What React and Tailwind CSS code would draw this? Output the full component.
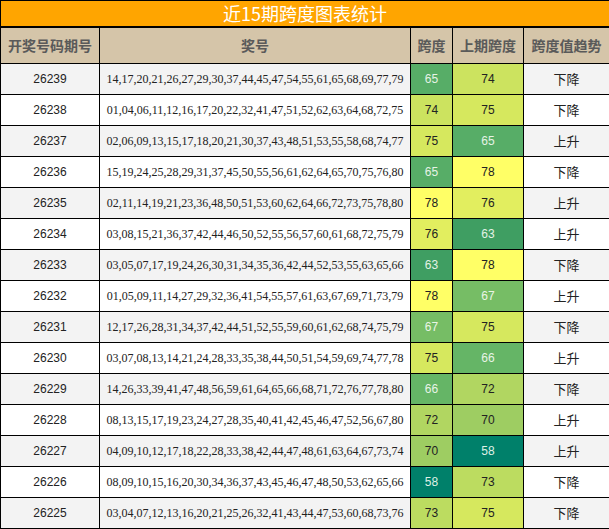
const rows = [
  ["26239", "14,17,20,21,26,27,29,30,37,44,45,47,54,55,61,65,68,69,77,79", 65, 74, "下降"],
  ["26238", "01,04,06,11,12,16,17,20,22,32,41,47,51,52,62,63,64,68,72,75", 74, 75, "下降"],
  ["26237", "02,06,09,13,15,17,18,20,21,30,37,43,48,51,53,55,58,68,74,77", 75, 65, "上升"],
  ["26236", "15,19,24,25,28,29,31,37,45,50,55,56,61,62,64,65,70,75,76,80", 65, 78, "下降"],
  ["26235", "02,11,14,19,21,23,36,48,50,51,53,60,62,64,66,72,73,75,78,80", 78, 76, "上升"],
  ["26234", "03,08,15,21,36,37,42,44,46,50,52,55,56,57,60,61,68,72,75,79", 76, 63, "上升"],
  ["26233", "03,05,07,17,19,24,26,30,31,34,35,36,42,44,52,53,55,63,65,66", 63, 78, "下降"],
  ["26232", "01,05,09,11,14,27,29,32,36,41,54,55,57,61,63,67,69,71,73,79", 78, 67, "上升"],
  ["26231", "12,17,26,28,31,34,37,42,44,51,52,55,59,60,61,62,68,74,75,79", 67, 75, "下降"],
  ["26230", "03,07,08,13,14,21,24,28,33,35,38,44,50,51,54,59,69,74,77,78", 75, 66, "上升"],
  ["26229", "14,26,33,39,41,47,48,56,59,61,64,65,66,68,71,72,76,77,78,80", 66, 72, "下降"],
  ["26228", "08,13,15,17,19,23,24,27,28,35,40,41,42,45,46,47,52,56,67,80", 72, 70, "上升"],
  ["26227", "04,09,10,12,17,18,22,28,33,38,42,44,47,48,61,63,64,67,73,74", 70, 58, "上升"],
  ["26226", "08,09,10,15,16,20,30,34,36,37,43,45,46,47,48,50,53,62,65,66", 58, 73, "下降"],
  ["26225", "03,04,07,12,13,16,20,21,25,26,32,41,43,44,47,53,60,68,73,76", 73, 75, "下降"],
];

// heat colours per span value
const heat = {
  58: "bg-[#00806a] text-[#dff0e6]",
  63: "bg-[#3f9e62] text-[#e3f2e6]",
  65: "bg-[#57ad67] text-[#e6f3e6]",
  66: "bg-[#65b566] text-[#e8f4e6]",
  67: "bg-[#76bd65] text-[#eaf5e6]",
  70: "bg-[#9ecd62] text-[#222]",
  72: "bg-[#b1d661] text-[#222]",
  73: "bg-[#bcdc60] text-[#222]",
  74: "bg-[#cce35f] text-[#222]",
  75: "bg-[#d6e85e] text-[#222]",
  76: "bg-[#e2ee5f] text-[#222]",
  78: "bg-[#ffff66] text-[#222]",
};

const sans = "font-['Liberation_Sans','Noto_Sans_CJK_SC',sans-serif]";
const cjk = "font-['Noto_Sans_CJK_SC',sans-serif]";

export default function App() {
  return (
    <div className="w-[609px] bg-white">
      <table className="w-[609px] table-fixed border-collapse">
        <colgroup>
          <col className="w-[99px]" />
          <col className="w-[311px]" />
          <col className="w-[42px]" />
          <col className="w-[71px]" />
          <col className="w-[86px]" />
        </colgroup>
        <thead>
          <tr>
            <th colSpan={5} className={`h-[26px] border border-b-2 border-black bg-[#ffa500] p-0 text-center text-[18px] font-normal leading-none text-white ${cjk}`}>
              近15期跨度图表统计
            </th>
          </tr>
          <tr className="bg-[#d5c5a9]">
            {["开奖号码期号", "奖号", "跨度", "上期跨度", "跨度值趋势"].map((h) => (
              <th key={h} className={`h-[37px] border border-black p-0 text-center text-[14px] font-bold text-[#5a5a5a] ${cjk}`}>
                {h}
              </th>
            ))}
          </tr>
        </thead>
        <tbody>
          {rows.map(([id, nums, span, prev, trend], i) => (
            <tr key={id} className={i % 2 === 0 ? "bg-[#f3f3f3]" : "bg-white"}>
              <td className={`h-[31px] border border-black p-0 text-center text-[12px] text-[#222] ${sans}`}>{id}</td>
              <td className="border border-black p-0 text-center font-['Liberation_Serif',serif] text-[12px] text-[#222]">{nums}</td>
              <td className={`border border-black p-0 text-center text-[12px] ${sans} ${heat[span]}`}>{span}</td>
              <td className={`border border-black p-0 text-center text-[12px] ${sans} ${heat[prev]}`}>{prev}</td>
              <td className={`border border-black p-0 text-center text-[13px] text-[#222] ${cjk}`}>{trend}</td>
            </tr>
          ))}
        </tbody>
      </table>
    </div>
  );
}
